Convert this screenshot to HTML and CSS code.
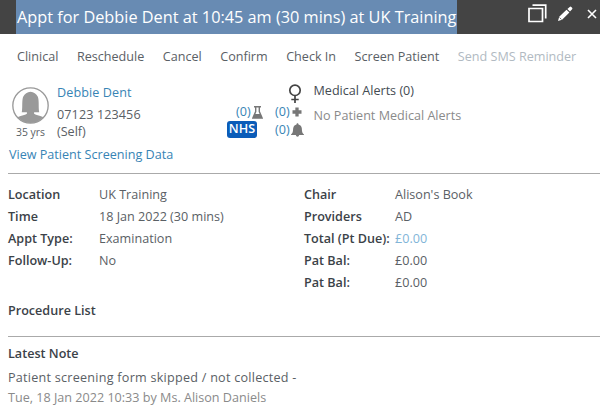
FILE: index.html
```
<!DOCTYPE html>
<html lang="en">
<head>
<meta charset="UTF-8">
<title>Appointment</title>
<link rel="stylesheet" href="styles.css">
</head>
<body>

<header class="titlebar">
    <h1><span class="selected">Appt for Debbie Dent at 10:45 am (30 mins) at UK Training</span></h1>
    <div class="tools">
        <svg class="icon-window" viewBox="0 0 19 19"><path d="M1 4.500h13.500v13H1zM4.500 1.200h13.200v13.300" fill="none" stroke="#fff" stroke-width="1.700"/></svg>
        <svg class="icon-edit" viewBox="0 0 16 16"><path d="M1 15l1.200-4.300L9.500 3.800l2.900 2.700-7.300 7.300zM10.400 3L12.700.9q.8-.7 1.600.1l.8.8q.7.8 0 1.500L13 5.600z" fill="#fff"/><path d="M2.500 11.500l2 2" stroke="#444" stroke-width=".7"/></svg>
        <svg class="icon-close" viewBox="0 0 10 10"><path d="M1 1l8 8M9 1L1 9" stroke="#fff" stroke-width="1.600"/></svg>
    </div>
</header>

<nav class="menu">
    <a>Clinical</a>
    <a>Reschedule</a>
    <a>Cancel</a>
    <a>Confirm</a>
    <a>Check In</a>
    <a>Screen Patient</a>
    <a class="disabled">Send SMS Reminder</a>
</nav>

<main>

<!-- Patient -->
<section class="patient">
    <div class="photo">
        <svg viewBox="0 0 36 36">
            <clipPath id="face"><circle cx="18" cy="18" r="17"/></clipPath>
            <circle cx="18" cy="18" r="17.200" fill="#fff" stroke="#999" stroke-width="1.300"/>
            <path clip-path="url(#face)" d="M9.500 24.500C10.500 20 9.300 13 11 9.300 12.200 6.600 15 4.500 18 4.500s5.800 2.100 7 4.800c1.700 3.700.5 10.700 1.500 15.200h-5v1.500c3 2.200 9 2 13 5.500L27 38H9l-7.500-6.500c4-3.500 10-3.300 13-5.500v-1.500z" fill="#999"/>
        </svg>
        <span class="age">35 yrs</span>
    </div>
    <div class="contact">
        <a class="name">Debbie Dent</a>
        <span class="phone">07123 123456</span>
        <span>(Self)</span>
    </div>
    <div class="flags">
        <div class="flag lab"><a>(0)</a>
            <svg class="icon-flask" viewBox="0 0 11 13"><path d="M2 .8h7M3.700 1v4.500L.9 12h9.200L7.300 5.500V1" fill="none" stroke="#777" stroke-width="1.400"/><path d="M2.500 8h6L10 12H1z" fill="#777"/></svg>
        </div>
        <span class="nhs">NHS</span>
    </div>
    <div class="counts">
        <svg class="icon-female" viewBox="0 0 14 19"><circle cx="7" cy="6.300" r="5.200" fill="none" stroke="#444" stroke-width="1.700"/><path d="M7 11.500V19M3.300 15.500h7.400" stroke="#444" stroke-width="1.700"/></svg>
        <div class="flag"><a>(0)</a>
            <svg class="icon-plus" viewBox="0 0 10 10"><path d="M5 .5v9M.5 5h9" stroke="#777" stroke-width="3.300"/></svg>
        </div>
        <div class="flag"><a>(0)</a>
            <svg class="icon-bell" viewBox="0 0 13 14"><path d="M0 11.500C2.500 9.500 1.800 7 2.300 4.700 2.700 3 4 2 5.500 1.600 5.500-.1 7.500-.1 7.500 1.600 9 2 10.300 3 10.700 4.700c.5 2.300-.2 4.800 2.300 6.800v.5H8.200q-.3 1.700-1.700 1.700T4.800 12H0z" fill="#777"/></svg>
        </div>
    </div>
    <div class="alerts">
        <span class="alerts-title">Medical Alerts (0)</span>
        <span class="alerts-none">No Patient Medical Alerts</span>
    </div>
</section>

<a class="screening">View Patient Screening Data</a>

<!-- Appointment details -->
<section class="details">
    <dl>
        <dt>Location</dt><dd>UK Training</dd>
        <dt>Time</dt><dd>18 Jan 2022 (30 mins)</dd>
        <dt>Appt Type:</dt><dd>Examination</dd>
        <dt>Follow-Up:</dt><dd>No</dd>
    </dl>
    <dl>
        <dt>Chair</dt><dd>Alison's Book</dd>
        <dt>Providers</dt><dd>AD</dd>
        <dt>Total (Pt Due):</dt><dd class="due">£0.00</dd>
        <dt>Pat Bal:</dt><dd>£0.00</dd>
        <dt>Pat Bal:</dt><dd>£0.00</dd>
    </dl>
</section>

<h2 class="procedures">Procedure List</h2>

<!-- Latest note -->
<section class="note">
    <h2>Latest Note</h2>
    <p class="note-text">Patient screening form skipped / not collected -</p>
    <p class="note-author">Tue, 18 Jan 2022 10:33 by Ms. Alison Daniels</p>
</section>

</main>

</body>
</html>
```
FILE: styles.css
```
* {
    box-sizing: border-box;
}

body {
    margin: 0;
    height: 408px;
    overflow: hidden;
    background: #fff;
    font-family: "Open Sans", sans-serif;
    font-size: 12.6px;
    line-height: 18px;
    color: #5a6065;
    white-space: nowrap;
}

svg {
    display: block;
    flex: none;
}

h1, h2, p, dl, dd {
    margin: 0;
}

/* Title bar */
.titlebar {
    display: flex;
    justify-content: space-between;
    height: 34px;
    padding-left: 16px;
    background: #444;
}

.titlebar h1 {
    font-size: 16.3px;
    font-weight: 400;
    line-height: 34px;
    color: #fff;
}

.selected {
    display: block;
    width: 441px;
    height: 34px;
    padding-left: 1px;
    background: #688bb3;
}

.tools {
    display: flex;
    align-items: flex-start;
    padding: 4px 3px 0 0;
}

.icon-window { width: 19px; height: 19px; }
.icon-edit { width: 16px; height: 16px; margin: 2px 0 0 10px; }
.icon-close { width: 10px; height: 10px; margin: 5px 0 0 14px; }

/* Menu */
.menu {
    display: flex;
    gap: 18.5px;
    padding: 14px 0 0 17px;
    height: 48px;
}

.menu .disabled {
    color: #b1bac2;
}

/* Patient */
main {
    padding-left: 8px;
}

.patient {
    display: flex;
    height: 64px;
}

.photo {
    width: 49px;
    padding: 5px 0 0 4px;
}

.photo svg {
    width: 37px;
    height: 37px;
}

.age {
    display: block;
    margin-left: 4px;
    font-size: 10.4px;
    line-height: 16px;
}

.contact {
    display: flex;
    flex-direction: column;
    width: 170px;
    padding-top: 2px;
    line-height: 17px;
}

.contact .name {
    margin-bottom: 5px;
    letter-spacing: .1px;
}

.contact .phone {
    letter-spacing: .1px;
}

.name, .screening, .flag a {
    color: #3784b5;
}

.flags {
    width: 48px;
    padding-top: 21px;
}

.flag {
    display: flex;
    align-items: center;
    gap: 1px;
    height: 18px;
}

.lab {
    padding-left: 9px;
}

.icon-flask { width: 11px; height: 13px; }
.icon-plus { width: 10px; height: 10px; margin-left: 1px; }
.icon-bell { width: 13px; height: 14px; }

.nhs {
    display: block;
    width: 30px;
    height: 17px;
    border-radius: 3px;
    background: #0b5cb8;
    color: #fff;
    font-weight: 600;
    line-height: 16px;
    text-align: center;
}

.counts {
    width: 38.5px;
}

.icon-female {
    width: 14px;
    height: 19px;
    margin: 2px 0 0 13px;
}

.alerts {
    display: flex;
    flex-direction: column;
    gap: 7px;
}

.alerts-title {
    color: #444b52;
}

.alerts-none {
    color: #8a8a8a;
}

.screening {
    display: block;
    height: 27px;
    margin-left: 1px;
}

/* Details */
.details {
    display: flex;
    height: 128px;
    padding-top: 10.5px;
    border-top: 1px solid #aaa;
}

.details dl {
    display: grid;
    grid-template-columns: 91px auto;
    grid-auto-rows: 22px;
    width: 297px;
    line-height: 20px;
}

dt, h2 {
    font-size: 12.6px;
    font-weight: 600;
    color: #3b4248;
}

.details .due {
    color: #81b5d8;
}

.procedures {
    height: 35px;
    line-height: 20px;
}

/* Note */
.note {
    border-top: 1px solid #aaa;
    padding-top: 7px;
}

.note h2 {
    line-height: 20px;
}

.note-text {
    margin-top: 4px;
    line-height: 20px;
    letter-spacing: .25px;
}

.note-author {
    line-height: 20px;
    color: #8a8a8a;
}
```
